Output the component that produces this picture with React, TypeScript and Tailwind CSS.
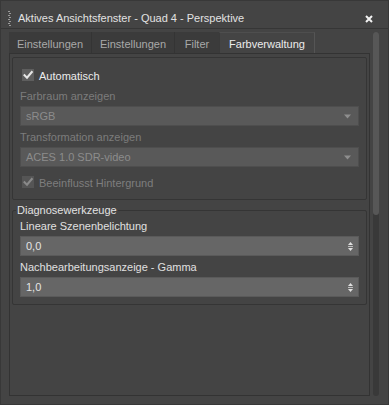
import React from "react";

function Check({ color }: { color: string }) {
  return (
    <svg width="12" height="12" viewBox="0 0 12 12">
      <path d="M2.5 6.2 L5 8.7 L9.8 3" fill="none" stroke={color} strokeWidth="2" strokeLinecap="square" />
    </svg>
  );
}

function CheckRow({ label, disabled }: { label: string; disabled?: boolean }) {
  return (
    <div className="flex h-[16px] items-center pl-[9px]">
      <div className={"flex h-[12px] w-[12px] items-center justify-center " + (disabled ? "bg-[#555555]" : "bg-[#5e5e5e]")}>
        <Check color={disabled ? "#8a8a8a" : "#e6e6e6"} />
      </div>
      <span className={"ml-[5px] pt-[2px] leading-[13px] " + (disabled ? "text-[#7e7e7e]" : "text-[#ececec]")}>{label}</span>
    </div>
  );
}

function SelectBox({ value }: { value: string }) {
  return (
    <div className="mx-[7px] flex h-[20px] items-center justify-between border border-[#4e4e4e] bg-[#595959] pl-[5px] pr-[7px]">
      <span className="leading-[13px] text-[#8c8c8c]">{value}</span>
      <svg width="7" height="5" viewBox="0 0 7 5">
        <path d="M0 0.5 H7 L3.5 4.5 Z" fill="#8e8e8e" />
      </svg>
    </div>
  );
}

function Spinner({ value }: { value: string }) {
  return (
    <div className="mx-[7px] flex h-[20px] items-center justify-between border border-[#5a5a5a] bg-[#666666] pl-[5px] pr-[4px]">
      <span className="leading-[13px] text-[#e4e4e4]">{value}</span>
      <svg width="7" height="11" viewBox="0 0 7 11">
        <path d="M1 4 L3.5 1 L6 4 Z" fill="#e0e0e0" />
        <rect x="1" y="5" width="5" height="1" fill="#bdbdbd" />
        <path d="M1 7 L6 7 L3.5 10 Z" fill="#e0e0e0" />
      </svg>
    </div>
  );
}

export default function App() {
  return (
    <div className="h-[405px] w-[389px] overflow-hidden border border-[#383838] bg-[#444444] text-[11px] font-['Liberation_Sans',Arial,sans-serif]">
      {/* title bar */}
      <div className="flex h-[28px] items-center border-b border-[#363636] pl-[7px] pr-[15px] pt-[8px]">
        <svg width="3" height="16" viewBox="0 0 3 16" className="shrink-0">
          {Array.from({ length: 8 }).map((_, i) => (
            <rect key={i} x={i % 2 === 0 ? 0 : 1} y={i * 2} width="2" height="1" fill="#9a9a9a" />
          ))}
        </svg>
        <span className="ml-[7px] leading-[13px] text-[#e2e2e2]">Aktives Ansichtsfenster - Quad 4 - Perspektive</span>
        <div className="flex-1" />
        <svg width="8" height="8" viewBox="0 0 8 8">
          <path d="M1 1 L7 7 M7 1 L1 7" stroke="#f2f2f2" strokeWidth="2" />
        </svg>
      </div>

      {/* body */}
      <div className="flex pl-[8px] pt-[3px]">
        <div className="flex w-[361px] flex-col">
          {/* tabs */}
          <div className="flex h-[21px]">
            <div className="flex w-[82px] items-center justify-center bg-[#3b3b3b] pt-[3px] leading-[13px] text-[#a9a9a9]">Einstellungen</div>
            <div className="w-[1px] bg-[#343434]" />
            <div className="flex w-[82px] items-center justify-center bg-[#3b3b3b] pt-[3px] leading-[13px] text-[#a9a9a9]">Einstellungen</div>
            <div className="w-[1px] bg-[#343434]" />
            <div className="flex w-[44px] items-center justify-center bg-[#3b3b3b] pt-[3px] leading-[13px] text-[#a9a9a9]">Filter</div>
            <div className="flex w-[96px] items-center justify-center border-x border-t border-l-[#3a3a3a] border-r-[#555555] border-t-[#4e4e4e] bg-[#444444] pt-[2px] leading-[13px] text-[#ececec]">Farbverwaltung</div>
          </div>

          {/* panel */}
          <div className="h-[343px] border border-[#333333] px-[2px] pt-[3px]">
            {/* group 1 */}
            <div className="flex h-[143px] flex-col rounded-[2px] border border-[#353535]">
              <div className="mt-[9px]">
                <CheckRow label="Automatisch" />
              </div>
              <div className="mt-[7px] h-[13px] pl-[7px] leading-[13px] text-[#7c7c7c]">Farbraum anzeigen</div>
              <div className="mt-[3px]">
                <SelectBox value="sRGB" />
              </div>
              <div className="mt-[5px] h-[13px] pl-[7px] leading-[13px] text-[#7c7c7c]">Transformation anzeigen</div>
              <div className="mt-[3px]">
                <SelectBox value="ACES 1.0 SDR-video" />
              </div>
              <div className="mt-[7px]">
                <CheckRow label="Beeinflusst Hintergrund" disabled />
              </div>
            </div>

            {/* group 2 */}
            <fieldset className="mt-[4px] rounded-[2px] border border-[#353535] pb-[7px]">
              <legend className="ml-[3px] h-[13px] px-[1px] leading-[13px] text-[#e2e2e2]">Diagnosewerkzeuge</legend>
              <div className="mt-[3px] h-[13px] pl-[7px] leading-[13px] text-[#e0e0e0]">Lineare Szenenbelichtung</div>
              <div className="mt-[3px]">
                <Spinner value="0,0" />
              </div>
              <div className="mt-[5px] h-[13px] pl-[7px] leading-[13px] text-[#e0e0e0]">Nachbearbeitungsanzeige - Gamma</div>
              <div className="mt-[3px]">
                <Spinner value="1,0" />
              </div>
            </fieldset>
          </div>
        </div>

        {/* scrollbar */}
        <div className="ml-[3px] flex h-[364px] w-[6px] flex-col rounded-[3px] bg-[#393939]">
          <div className="h-[183px] rounded-[3px] bg-[#575757]" />
        </div>
      </div>
    </div>
  );
}
